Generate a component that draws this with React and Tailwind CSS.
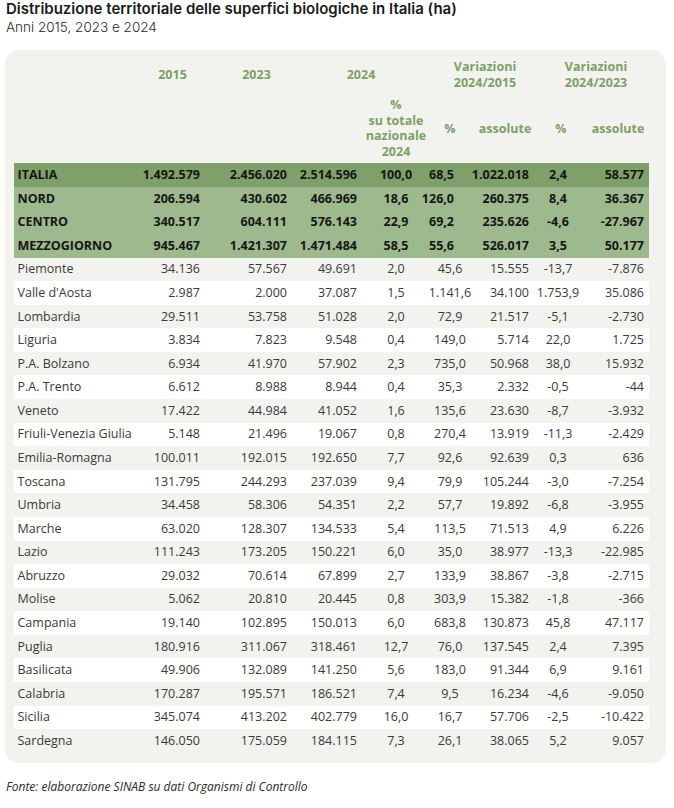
import React from "react";

const rows = [
  ["ITALIA", "1.492.579", "2.456.020", "2.514.596", "100,0", "68,5", "1.022.018", "2,4", "58.577", "top"],
  ["NORD", "206.594", "430.602", "466.969", "18,6", "126,0", "260.375", "8,4", "36.367", "area"],
  ["CENTRO", "340.517", "604.111", "576.143", "22,9", "69,2", "235.626", "-4,6", "-27.967", "area"],
  ["MEZZOGIORNO", "945.467", "1.421.307", "1.471.484", "58,5", "55,6", "526.017", "3,5", "50.177", "area"],
  ["Piemonte", "34.136", "57.567", "49.691", "2,0", "45,6", "15.555", "-13,7", "-7.876"],
  ["Valle d'Aosta", "2.987", "2.000", "37.087", "1,5", "1.141,6", "34.100", "1.753,9", "35.086"],
  ["Lombardia", "29.511", "53.758", "51.028", "2,0", "72,9", "21.517", "-5,1", "-2.730"],
  ["Liguria", "3.834", "7.823", "9.548", "0,4", "149,0", "5.714", "22,0", "1.725"],
  ["P.A. Bolzano", "6.934", "41.970", "57.902", "2,3", "735,0", "50.968", "38,0", "15.932"],
  ["P.A. Trento", "6.612", "8.988", "8.944", "0,4", "35,3", "2.332", "-0,5", "-44"],
  ["Veneto", "17.422", "44.984", "41.052", "1,6", "135,6", "23.630", "-8,7", "-3.932"],
  ["Friuli-Venezia Giulia", "5.148", "21.496", "19.067", "0,8", "270,4", "13.919", "-11,3", "-2.429"],
  ["Emilia-Romagna", "100.011", "192.015", "192.650", "7,7", "92,6", "92.639", "0,3", "636"],
  ["Toscana", "131.795", "244.293", "237.039", "9,4", "79,9", "105.244", "-3,0", "-7.254"],
  ["Umbria", "34.458", "58.306", "54.351", "2,2", "57,7", "19.892", "-6,8", "-3.955"],
  ["Marche", "63.020", "128.307", "134.533", "5,4", "113,5", "71.513", "4,9", "6.226"],
  ["Lazio", "111.243", "173.205", "150.221", "6,0", "35,0", "38.977", "-13,3", "-22.985"],
  ["Abruzzo", "29.032", "70.614", "67.899", "2,7", "133,9", "38.867", "-3,8", "-2.715"],
  ["Molise", "5.062", "20.810", "20.445", "0,8", "303,9", "15.382", "-1,8", "-366"],
  ["Campania", "19.140", "102.895", "150.013", "6,0", "683,8", "130.873", "45,8", "47.117"],
  ["Puglia", "180.916", "311.067", "318.461", "12,7", "76,0", "137.545", "2,4", "7.395"],
  ["Basilicata", "49.906", "132.089", "141.250", "5,6", "183,0", "91.344", "6,9", "9.161"],
  ["Calabria", "170.287", "195.571", "186.521", "7,4", "9,5", "16.234", "-4,6", "-9.050"],
  ["Sicilia", "345.074", "413.202", "402.779", "16,0", "16,7", "57.706", "-2,5", "-10.422"],
  ["Sardegna", "146.050", "175.059", "184.115", "7,3", "26,1", "38.065", "5,2", "9.057"],
];

const grid =
  "grid grid-cols-[126.5px_65px_87px_70px_68px_40px_64px_48px_67px]";

function Row({ r, i }) {
  const kind = r[9];
  const bold = !!kind;
  let bg = "";
  if (kind === "top") bg = "bg-[#80a06b]";
  else if (kind === "area") bg = "bg-[#9eb98d]";
  else bg = (i - 4) % 2 === 0 ? "bg-[#f2f3ef]" : "bg-white";
  const txt = bold
    ? "font-bold text-[#161616]"
    : "font-normal text-[#3a3a3a]";
  return (
    <div className={`${grid} h-[23.58px] items-center ${bg} ${txt}`}>
      <div className="pl-[4px] whitespace-nowrap">{r[0]}</div>
      <div className="text-right pr-[5px]">{r[1]}</div>
      <div className="text-right pr-[5px]">{r[2]}</div>
      <div className="text-right pr-[5px]">{r[3]}</div>
      <div className="text-center">{r[4]}</div>
      <div className={bold ? "text-right pr-[16px] -ml-[20px]" : "text-center whitespace-nowrap -mx-[10px]"}>{r[5]}</div>
      <div className="text-right pr-[5px]">{r[6]}</div>
      <div className="text-center whitespace-nowrap -mx-[10px]">{r[7]}</div>
      <div className="text-right pr-[5px]">{r[8]}</div>
    </div>
  );
}

export default function App() {
  return (
    <div className="w-[674px] bg-white font-['Open_Sans',sans-serif]">
      <div className="pl-[6px] font-['Inter',sans-serif] text-[15px] leading-[18.5px] font-semibold text-[#1a1a1a] whitespace-nowrap">
        Distribuzione territoriale delle superfici biologiche in Italia (ha)
      </div>
      <div className="pl-[6px] font-['Inter',sans-serif] text-[13.5px] leading-[17px] font-light text-[#2a2a2a]">
        Anni 2015, 2023 e 2024
      </div>
      <div className="ml-[5px] mt-[14.5px] w-[661px] rounded-[14px] bg-[#f2f3ef] pl-[8.5px] pr-[17px] pt-[9px] pb-[10px]">
        <div className="text-[12.5px] leading-[15.7px] font-bold text-[#7f9f69]">
          <div className={`${grid} items-center h-[31.4px]`}>
            <div></div>
            <div className="text-center">2015</div>
            <div className="text-center pl-[16px]">2023</div>
            <div className="col-span-2 text-center">2024</div>
            <div className="col-span-2 text-center pl-[6px]">
              Variazioni
              <br />
              2024/2015
            </div>
            <div className="col-span-2 text-center pl-[9px]">
              Variazioni
              <br />
              2024/2023
            </div>
          </div>
          <div className={`${grid} items-center h-[62.8px] mt-[6.6px]`}>
            <div></div>
            <div></div>
            <div></div>
            <div></div>
            <div className="text-center">
              %
              <br />
              su totale
              <br />
              nazionale
              <br />
              2024
            </div>
            <div className="text-center">%</div>
            <div className="text-center pl-[6px]">assolute</div>
            <div className="text-center pl-[6px]">%</div>
            <div className="text-center pl-[5px]">assolute</div>
          </div>
        </div>
        <div className="mt-[3.5px] text-[12.5px] leading-[16px]">
          {rows.map((r, i) => (
            <Row key={r[0]} r={r} i={i} />
          ))}
        </div>
      </div>
      <div className="pl-[6px] mt-[16px] text-[12px] leading-[15px] italic text-[#2a2a2a]">
        Fonte: elaborazione SINAB su dati Organismi di Controllo
      </div>
    </div>
  );
}
